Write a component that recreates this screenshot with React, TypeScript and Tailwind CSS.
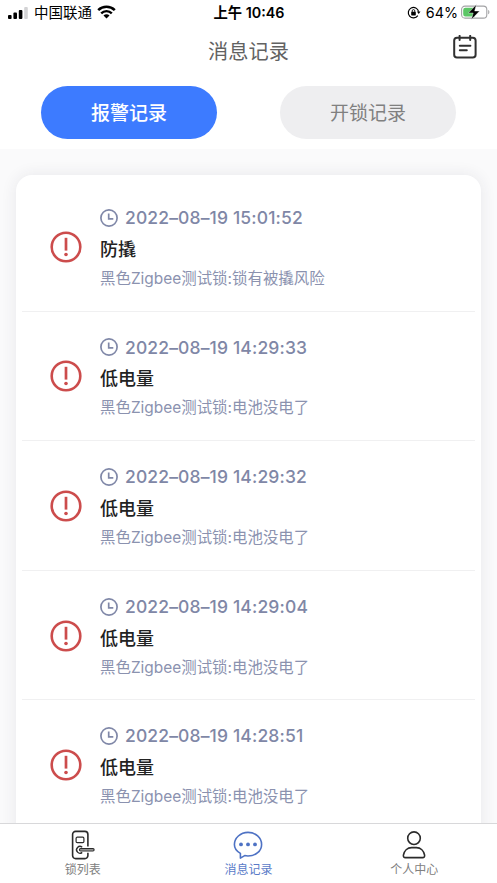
import React, { useState } from 'react'

interface AlarmRecord {
  id: number
  time: string
  title: string
  desc: string
}

const records: AlarmRecord[] = [
  { id: 1, time: '2022–08–19 15:01:52', title: '防撬', desc: '黑色Zigbee测试锁:锁有被撬风险' },
  { id: 2, time: '2022–08–19 14:29:33', title: '低电量', desc: '黑色Zigbee测试锁:电池没电了' },
  { id: 3, time: '2022–08–19 14:29:32', title: '低电量', desc: '黑色Zigbee测试锁:电池没电了' },
  { id: 4, time: '2022–08–19 14:29:04', title: '低电量', desc: '黑色Zigbee测试锁:电池没电了' },
  { id: 5, time: '2022–08–19 14:28:51', title: '低电量', desc: '黑色Zigbee测试锁:电池没电了' }
]

function StatusBar() {
  return (
    <div className="grid h-[25px] shrink-0 grid-cols-3 items-center pl-2 pr-[7px] text-black">
      <div className="flex items-center">
        <svg width="20" height="12" viewBox="0 0 20 12">
          <rect x="0" y="8" width="3.6" height="4" rx="1" />
          <rect x="5.4" y="5.6" width="3.6" height="6.4" rx="1" />
          <rect x="10.8" y="3" width="3.6" height="9" rx="1" />
          <rect x="16.2" y="0" width="3.6" height="12" rx="1" fill="#d3d3d5" />
        </svg>
        <span className="ml-[6px] pt-[2px] text-[14.5px] leading-none">中国联通</span>
        <svg className="ml-[5px] -mt-px" width="19" height="14" viewBox="0 0 19 14" fill="none" stroke="#000">
          <path d="M1.2 5.2a11.8 11.8 0 0 1 16.6 0" strokeWidth="2.5" />
          <path d="M4.2 8.3a7.5 7.5 0 0 1 10.6 0" strokeWidth="2.4" />
          <path d="M9.5 13.6 6.5 10.6a4.2 4.2 0 0 1 6 0z" fill="#000" stroke="none" />
        </svg>
      </div>
      <div className="whitespace-nowrap pt-[2px] text-center text-[14.3px] font-semibold leading-none">上午 10:46</div>
      <div className="flex items-center justify-end">
        <svg width="14" height="13" viewBox="0 0 14 13" fill="none" stroke="#000" strokeWidth="1.2">
          <path d="M10.8 9.6A5.2 5.2 0 1 1 11.6 5.6" />
          <path d="M9.9 5.5h3.6l-1.8 2.6z" fill="#000" stroke="none" />
          <rect x="4.2" y="5.8" width="4.6" height="3.6" rx="0.6" fill="#000" stroke="none" />
          <path d="M5.2 6V4.9a1.3 1.3 0 0 1 2.6 0V6" strokeWidth="0.9" />
        </svg>
        <span className="ml-[5px] pt-px text-[14.3px] leading-none">64%</span>
        <svg className="ml-[3px] -mt-px" width="29" height="16" viewBox="0 0 29 16">
          <rect x="0.6" y="2.1" width="25.2" height="12" rx="3.4" fill="#fff" stroke="#a3a3a5" strokeWidth="1.1" />
          <path d="M4.4 3.7H14v8.8H4.4a2.2 2.2 0 0 1-2.2-2.2V5.9a2.2 2.2 0 0 1 2.2-2.2z" fill="#5cc666" />
          <path d="M27.2 6c1.6.5 1.6 3.7 0 4.2z" fill="#a3a3a5" />
          <path d="M15.4 0.6 7.4 9h4.8l-1.8 6.6L18.6 7h-5z" fill="#000" stroke="#fff" strokeWidth="0.4" />
        </svg>
      </div>
    </div>
  )
}

function CalendarIcon() {
  return (
    <svg width="24" height="24" viewBox="0 0 24 24" fill="none" stroke="#303030" strokeWidth="2" strokeLinecap="round">
      <rect x="1.2" y="2.8" width="21.4" height="19.8" rx="2.8" />
      <path d="M6.6 0.9v4M17.2 0.9v4M6.8 10.7h10.6M6.8 15.3h7" />
    </svg>
  )
}

function AlertIcon() {
  return (
    <svg width="32" height="32" viewBox="0 0 32 32" fill="none" stroke="#cc4c4c">
      <circle cx="16" cy="16" r="14.3" strokeWidth="2.6" />
      <path d="M16 6.8v12.8" strokeWidth="2.7" />
      <circle cx="16" cy="23.5" r="1.8" fill="#cc4c4c" stroke="none" />
    </svg>
  )
}

function ClockIcon() {
  return (
    <svg width="18" height="18" viewBox="0 0 18 18" fill="none" stroke="#8088a8" strokeWidth="1.7">
      <circle cx="9" cy="9" r="8.1" />
      <path d="M8.7 4.6v5.2h4.6" />
    </svg>
  )
}

function LockIcon() {
  return (
    <svg width="24" height="30" viewBox="0 0 24 30" fill="none" stroke="#2b2b2b" strokeWidth="1.6">
      <path d="M16.9 16.6V4.4a3 3 0 0 0-3-3H4.6a3 3 0 0 0-3 3v21.2a3 3 0 0 0 3 3h9.3a3 3 0 0 0 3-3v-2.8" />
      <rect x="5.1" y="7.2" width="7.8" height="5.4" rx="1.2" strokeWidth="1.2" />
      <path d="M11.2 17.2a3.4 3.4 0 1 0 0 5.2" strokeWidth="1.4" />
      <path d="M9.6 18.6H22c1.5 0 1.5 2.4 0 2.4H9.6a1.2 1.2 0 0 1 0-2.4z" fill="#b5b5b5" strokeWidth="1.1" />
    </svg>
  )
}

function MessageIcon() {
  return (
    <svg width="30" height="30" viewBox="0 0 30 30" fill="none" stroke="#4e72c4" strokeWidth="1.6" strokeLinejoin="round">
      <path d="M7.4 28.1V23.4C3.7 21.4 1.4 18.3 1.4 14.6 1.4 7.9 7.4 2.4 15 2.4s13.6 5.3 13.6 12S22.6 26 15 26c-1.2 0-2.3-.1-3.3-.4z" />
      <g fill="#4e72c4" stroke="none">
        <circle cx="8" cy="14.4" r="1.9" />
        <circle cx="15" cy="14.4" r="1.9" />
        <circle cx="22" cy="14.4" r="1.9" />
      </g>
    </svg>
  )
}

function UserIcon() {
  return (
    <svg width="24" height="30" viewBox="0 0 24 30" fill="none" stroke="#2b2b2b" strokeWidth="1.6">
      <circle cx="12" cy="8.2" r="6.3" />
      <path d="M3.4 27.6h17.2c1.5 0 2.2-1 2-2.4-.7-4.5-4-7.6-8.2-7.6H9.6c-4.2 0-7.5 3.1-8.2 7.6-.2 1.4.5 2.4 2 2.4z" />
    </svg>
  )
}

export default function App() {
  const [activeTab, setActiveTab] = useState<'alarm' | 'unlock'>('alarm')

  const tabs = [
    { value: 'alarm', label: '报警记录' },
    { value: 'unlock', label: '开锁记录' }
  ]

  const navItems = [
    { label: '锁列表', icon: <LockIcon />, active: false },
    { label: '消息记录', icon: <MessageIcon />, active: true },
    { label: '个人中心', icon: <UserIcon />, active: false }
  ]

  return (
    <div className="flex h-[883px] w-full flex-col overflow-hidden bg-white font-['Inter','Noto_Sans_CJK_SC',sans-serif]">
      <StatusBar />

      {/* 标题栏 */}
      <header className="grid h-[52px] shrink-0 grid-cols-3 items-center px-5">
        <h1 className="col-start-2 pt-[3px] text-center text-[20.2px] leading-none text-[#626262]">消息记录</h1>
        <button className="mb-[9px] justify-self-end">
          <CalendarIcon />
        </button>
      </header>

      <div className="flex h-[72px] shrink-0 justify-between px-[41px] pt-[9px]">
        {tabs.map((tab) => (
          <button
            key={tab.value}
            onClick={() => setActiveTab(tab.value as any)}
            className={`h-[53px] w-[176px] rounded-full pt-px text-[19px] leading-none ${
              activeTab === tab.value ? 'bg-[#3d7bff] font-medium text-white' : 'bg-[#eeeef0] text-[#808080]'
            }`}
          >
            {tab.label}
          </button>
        ))}
      </div>

      {/* 记录列表 */}
      <main className="min-h-0 flex-1 overflow-hidden bg-[#fafafb] px-4 pt-[26px]">
        <div className="h-[720px] rounded-2xl bg-white px-[6px] pt-[7px] shadow-[0_0_16px_rgba(40,40,70,0.09)]">
          {records.map((record) => (
            <div key={record.id} className="flex h-[129.6px] items-center border-b border-[#f0f0f1] pl-7 pt-px">
              <AlertIcon />
              <div className="ml-[18px] pt-[4px]">
                <div className="flex h-6 items-center text-[#7f87a6]">
                  <ClockIcon />
                  <span className="ml-[7px] whitespace-nowrap text-[17.5px] font-medium leading-none tracking-[0.14px]">{record.time}</span>
                </div>
                <div className="mt-[5px] h-[30px] text-[18px] font-medium leading-[30px] text-[#222]">{record.title}</div>
                <div className="mt-px h-[26px] whitespace-nowrap text-[15.45px] leading-[26px] text-[#8b92af]">{record.desc}</div>
              </div>
            </div>
          ))}
        </div>
      </main>

      <nav className="grid h-[60px] shrink-0 grid-cols-3 border-t border-[#d8d8da] bg-white">
        {navItems.map((item) => (
          <button
            key={item.label}
            className={`flex flex-col items-center pt-[6px] text-[12px] leading-none ${
              item.active ? 'text-[#5a7bc8]' : 'text-[#808080]'
            }`}
          >
            {item.icon}
            <span className="mt-[4px]">{item.label}</span>
          </button>
        ))}
      </nav>
    </div>
  )
}
